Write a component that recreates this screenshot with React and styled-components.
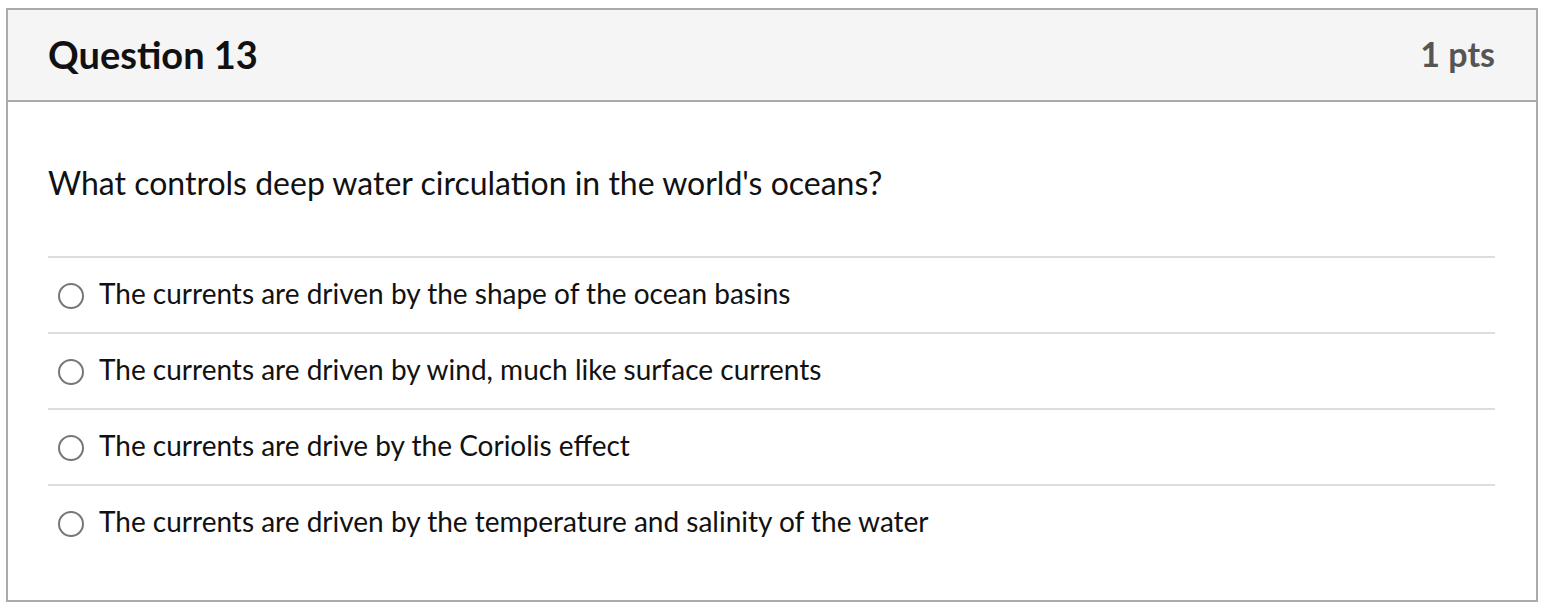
import React from 'react'
import styled, { createGlobalStyle } from 'styled-components'

const GlobalStyle = createGlobalStyle`
  body {
    margin: 0;
    background: #fff;
    font-family: Lato, "Noto Sans", sans-serif;
    color: #111;
  }
`

const answers = [
  'The currents are driven by the shape of the ocean basins',
  'The currents are driven by wind, much like surface currents',
  'The currents are drive by the Coriolis effect',
  'The currents are driven by the temperature and salinity of the water'
]

function App() {
  return (
    <Page>
      <GlobalStyle />
      <Card>
        <Header>
          <Title>Question 13</Title>
          <Points>1 pts</Points>
        </Header>
        <Body>
          <Prompt>What controls deep water circulation in the world's oceans?</Prompt>
          <Answers>
            {answers.map((a, i) => (
              <Answer key={i}>
                <Radio />
                <AnswerText>{a}</AnswerText>
              </Answer>
            ))}
          </Answers>
        </Body>
      </Card>
    </Page>
  )
}

export default App

const Page = styled.div`
  padding: 8px 0 0 6px;
`

const Card = styled.div`
  width: 1532px;
  box-sizing: border-box;
  border: 2px solid #aaa;
  height: 594px;
`

const Header = styled.div`
  display: flex;
  align-items: center;
  justify-content: space-between;
  height: 92px;
  box-sizing: border-box;
  padding: 0 41px 3px 40px;
  background: #f5f5f5;
  border-bottom: 2px solid #aaa;
`

const Title = styled.h2`
  margin: 0;
  font-size: 38px;
  font-weight: 700;
  color: #111;
`

const Points = styled.div`
  font-size: 34px;
  font-weight: 700;
  color: #555;
`

const Body = styled.div`
  padding: 63px 41px 40px 40px;
`

const Prompt = styled.p`
  margin: 0 0 55px;
  font-size: 32px;
  line-height: 36px;
`

const Answers = styled.div`
  display: flex;
  flex-direction: column;
`

const Answer = styled.label`
  display: flex;
  align-items: center;
  height: 76px;
  box-sizing: border-box;
  border-top: 2px solid #ddd;
  padding-left: 10px;
`

const Radio = styled.span`
  width: 26px;
  height: 26px;
  margin-top: 1px;
  box-sizing: border-box;
  border: 2px solid #777;
  border-radius: 50%;
  background: #fff;
  flex-shrink: 0;
`

const AnswerText = styled.span`
  margin-left: 15px;
  padding-bottom: 5px;
  font-size: 28px;
  line-height: 32px;
`
